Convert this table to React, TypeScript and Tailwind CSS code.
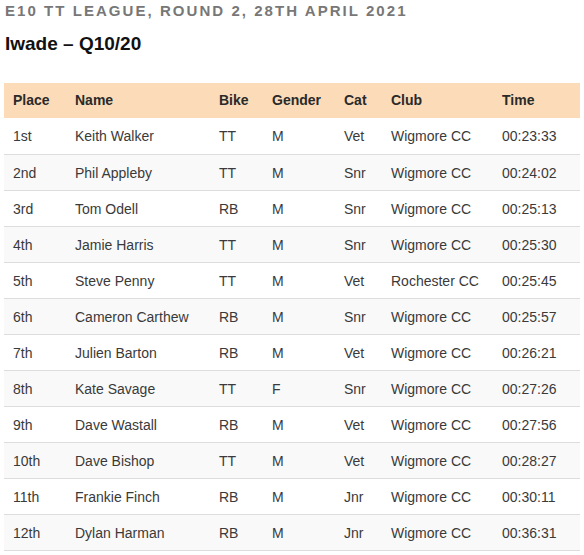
const results = [
  { place: '1st', name: 'Keith Walker', bike: 'TT', gender: 'M', cat: 'Vet', club: 'Wigmore CC', time: '00:23:33' },
  { place: '2nd', name: 'Phil Appleby', bike: 'TT', gender: 'M', cat: 'Snr', club: 'Wigmore CC', time: '00:24:02' },
  { place: '3rd', name: 'Tom Odell', bike: 'RB', gender: 'M', cat: 'Snr', club: 'Wigmore CC', time: '00:25:13' },
  { place: '4th', name: 'Jamie Harris', bike: 'TT', gender: 'M', cat: 'Snr', club: 'Wigmore CC', time: '00:25:30' },
  { place: '5th', name: 'Steve Penny', bike: 'TT', gender: 'M', cat: 'Vet', club: 'Rochester CC', time: '00:25:45' },
  { place: '6th', name: 'Cameron Carthew', bike: 'RB', gender: 'M', cat: 'Snr', club: 'Wigmore CC', time: '00:25:57' },
  { place: '7th', name: 'Julien Barton', bike: 'RB', gender: 'M', cat: 'Vet', club: 'Wigmore CC', time: '00:26:21' },
  { place: '8th', name: 'Kate Savage', bike: 'TT', gender: 'F', cat: 'Snr', club: 'Wigmore CC', time: '00:27:26' },
  { place: '9th', name: 'Dave Wastall', bike: 'RB', gender: 'M', cat: 'Vet', club: 'Wigmore CC', time: '00:27:56' },
  { place: '10th', name: 'Dave Bishop', bike: 'TT', gender: 'M', cat: 'Vet', club: 'Wigmore CC', time: '00:28:27' },
  { place: '11th', name: 'Frankie Finch', bike: 'RB', gender: 'M', cat: 'Jnr', club: 'Wigmore CC', time: '00:30:11' },
  { place: '12th', name: 'Dylan Harman', bike: 'RB', gender: 'M', cat: 'Jnr', club: 'Wigmore CC', time: '00:36:31' },
];

const cols = ['w-[62px]', 'w-[144px]', 'w-[53px]', 'w-[72px]', 'w-[47px]', 'w-[111px]', ''];

const App = () => {
  return (
    <div className="px-[4px] pt-[1px] font-['Liberation_Sans',sans-serif] text-[#333]">
      <h2 className="pl-[1px] text-[15px] leading-[20px] font-bold tracking-[2.05px] uppercase text-[#777]">
        E10 TT League, Round 2, 28th April 2021
      </h2>
      <h3 className="pl-[1px] mt-[11px] text-[19px] leading-[24px] font-bold text-[#111]">Iwade – Q10/20</h3>

      <table className="mt-[27px] w-[576px] border-collapse text-[14px] text-left">
        <thead>
          <tr className="bg-[#fcdcb8] h-[35px]">
            {['Place', 'Name', 'Bike', 'Gender', 'Cat', 'Club', 'Time'].map((h, i) => (
              <th key={h} className={`${cols[i]} pl-[9px] font-bold text-[#2a2a2a]`}>
                {h}
              </th>
            ))}
          </tr>
        </thead>
        <tbody>
          {results.map((r, idx) => (
            <tr key={r.place} className={`h-[36px] border-b border-[#dddddd] ${idx % 2 === 1 ? 'bg-[#f9f9f9]' : 'bg-white'}`}>
              {[r.place, r.name, r.bike, r.gender, r.cat, r.club, r.time].map((v, i) => (
                <td key={i} className="pl-[9px] pt-[2px] text-[#3a3a3a]">
                  {v}
                </td>
              ))}
            </tr>
          ))}
        </tbody>
      </table>
    </div>
  );
};

export default App;
